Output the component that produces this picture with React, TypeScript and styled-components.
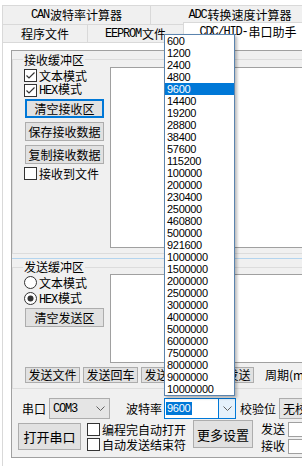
import React from 'react';
import styled, { createGlobalStyle, css } from 'styled-components';

const GlobalStyle = createGlobalStyle`
  html, body { margin: 0; padding: 0; background: #ffffff; }
  body {
    font-family: "Noto Sans CJK SC", "Liberation Sans", sans-serif;
    font-size: 12px;
    color: #000;
  }
  * { box-sizing: border-box; }
`;

const Window = styled.div`
  position: relative;
  width: 302px;
  height: 466px;
  overflow: hidden;
  background: #fff;
  display: flex;
  flex-direction: column;
`;

const TabHeader = styled.div`
  flex: none;
  height: 42px;
  padding: 5px 0 0 2px;
  display: flex;
  flex-direction: column;
`;

const TabRow = styled.div<{ $h: number }>`
  flex: none;
  display: flex;
  align-items: flex-end;
  height: ${(p) => p.$h}px;
`;

const Tab = styled.div<{ $w: number; $active?: boolean }>`
  flex: 0 0 ${(p) => p.$w}px;
  height: 100%;
  margin-right: -1px;
  border: 1px solid #d9d9d9;
  border-bottom: none;
  background: #f0f0f0;
  display: flex;
  align-items: center;
  justify-content: center;
  white-space: nowrap;
  line-height: 14px;
  ${(p) =>
    p.$active &&
    css`
      position: relative;
      z-index: 2;
      height: 21px;
      margin-bottom: -1px;
      padding-bottom: 2px;
      background: #fff;
    `}
`;

const Narrow = styled.span`
  font-family: "Liberation Mono", monospace;
  font-size: 12px;
  letter-spacing: -1.2px;
  margin-right: 1px;
`;

const TabPage = styled.div`
  flex: 1;
  margin-left: 2px;
  border-left: 1px solid #d9d9d9;
  border-top: 1px solid #d9d9d9;
  background: #fff;
  padding: 7px 0 0 8px;
`;

const Frame = styled.div`
  width: 330px;
  height: 408px;
  border: 1px solid #a0a0a0;
  border-right: none;
  background: #f0f0f0;
  display: flex;
  flex-direction: column;
`;

const Group = styled.fieldset<{ $mt: number; $pb: number }>`
  margin: ${(p) => p.$mt}px 0 0 0;
  padding: 0 0 ${(p) => p.$pb}px 11px;
  width: 320px;
  min-width: 0;
  border: 1px solid #dcdcdc;
  border-right: none;
`;

const Legend = styled.legend<{ $lh: number }>`
  padding: 0 1px;
  margin-left: -1px;
  line-height: ${(p) => p.$lh}px;
  font-size: 12px;
`;

const GroupBody = styled.div`
  display: grid;
  grid-template-columns: 86px 1fr;
  align-items: start;
`;

const Side = styled.div<{ $pt: number }>`
  display: flex;
  flex-direction: column;
  align-items: flex-start;
  padding-top: ${(p) => p.$pt}px;
`;

const TextBox = styled.div<{ $h: number }>`
  margin-top: 1px;
  height: ${(p) => p.$h}px;
  background: #fff;
  border: 1px solid #a0a0a0;
  border-right: none;
`;

const OptionRow = styled.div<{ $mt?: number; $h?: number }>`
  display: flex;
  align-items: center;
  gap: 2px;
  height: ${(p) => p.$h ?? 14}px;
  margin-top: ${(p) => p.$mt ?? 0}px;
  line-height: 13px;
  white-space: nowrap;
`;

const Button = styled.button<{ $w: number; $h: number; $mt?: number; $ml?: number; $focus?: boolean; $big?: boolean }>`
  flex: none;
  width: ${(p) => p.$w}px;
  height: ${(p) => p.$h}px;
  margin: ${(p) => p.$mt ?? 0}px 0 0 ${(p) => p.$ml ?? 1}px;
  padding: 0;
  border: 1px solid #adadad;
  background: #e1e1e1;
  color: #000;
  font-family: inherit;
  font-size: ${(p) => (p.$big ? 13 : 12)}px;
  line-height: 1;
  display: flex;
  align-items: center;
  justify-content: center;
  white-space: nowrap;
  overflow: hidden;
  ${(p) =>
    p.$focus &&
    css`
      border-color: #0078d7;
      box-shadow: inset 0 0 0 1px #0078d7;
    `}
`;

const Splitter = styled.div`
  height: 1px;
  margin: 4px 0 2px;
  background: #b3d4ee;
`;

const ButtonRow = styled.div`
  display: flex;
  align-items: center;
  gap: 2px;
  margin-top: 4px;
  white-space: nowrap;
`;

const Hint = styled.span`
  margin-left: 9px;
  line-height: 14px;
`;

const ControlRow = styled.div<{ $mt: number; $pl: number; $h: number }>`
  display: flex;
  align-items: flex-start;
  margin-top: ${(p) => p.$mt}px;
  padding-left: ${(p) => p.$pl}px;
  height: ${(p) => p.$h}px;
  white-space: nowrap;
`;

const Caption = styled.span<{ $ml?: number; $mr?: number; $top?: number }>`
  margin-left: ${(p) => p.$ml ?? 0}px;
  margin-right: ${(p) => p.$mr ?? 0}px;
  margin-top: ${(p) => p.$top ?? 0}px;
  line-height: 14px;
`;

const Combo = styled.div<{ $w: number }>`
  flex: none;
  width: ${(p) => p.$w}px;
  height: 21px;
  border: 1px solid #adadad;
  background: #e5e5e5;
  display: flex;
  align-items: center;
  justify-content: space-between;
  padding: 0 4px 0 3px;
  overflow: hidden;
`;

const EditCombo = styled.div`
  flex: none;
  width: 72px;
  height: 21px;
  border: 1px solid #0078d7;
  background: #fff;
  display: flex;
`;

const EditField = styled.div`
  flex: 1;
  display: flex;
  align-items: center;
  padding-left: 1px;
`;

const SelText = styled.span`
  background: #0078d7;
  color: #fff;
  font-family: "Liberation Sans", sans-serif;
  font-size: 11px;
  letter-spacing: -0.3px;
  line-height: 13px;
  padding: 0 2px 0 1px;
`;

const DropButton = styled.div`
  width: 17px;
  border-left: 1px solid #0078d7;
  background: #e5f1fb;
  display: flex;
  align-items: center;
  justify-content: center;
`;

const OptionColumn = styled.div<{ $ml: number; $mt: number }>`
  display: flex;
  flex-direction: column;
  gap: 1px;
  margin-left: ${(p) => p.$ml}px;
  margin-top: ${(p) => p.$mt}px;
`;

const CountRow = styled.div`
  display: flex;
  align-items: center;
  height: 16px;
  gap: 3px;
  line-height: 14px;
`;

const SmallBox = styled.div`
  width: 30px;
  height: 15px;
  border: 1px solid #a0a0a0;
  background: #fff;
`;

const DropList = styled.ul`
  position: absolute;
  left: 164px;
  top: 34px;
  width: 71px;
  margin: 0;
  padding: 0;
  list-style: none;
  background: #fff;
  border: 1px solid #5b84ae;
  box-shadow: 2px 2px 3px rgba(0, 0, 0, 0.28);
  z-index: 10;
`;

const DropItem = styled.li<{ $sel?: boolean }>`
  height: 12px;
  line-height: 12px;
  padding-left: 2px;
  font-family: "Liberation Sans", sans-serif;
  font-size: 11px;
  letter-spacing: -0.3px;
  ${(p) =>
    p.$sel &&
    css`
      background: #0078d7;
      color: #fff;
    `}
`;

const CheckIcon = ({ checked }: { checked?: boolean }) => (
  <svg width="13" height="13" viewBox="0 0 13 13">
    <rect x="0.5" y="0.5" width="12" height="12" fill="#fff" stroke="#333" />
    {checked && (
      <polyline points="2.5,6.5 5,9 10.5,3.5" fill="none" stroke="#333" strokeWidth="1.2" />
    )}
  </svg>
);

const RadioIcon = ({ checked }: { checked?: boolean }) => (
  <svg width="13" height="13" viewBox="0 0 13 13">
    <circle cx="6.5" cy="6.5" r="6" fill="#fff" stroke="#333" />
    {checked && <circle cx="6.5" cy="6.5" r="3" fill="#333" />}
  </svg>
);

const Chevron = () => (
  <svg width="9" height="5" viewBox="0 0 9 5">
    <polyline points="0.5,0.5 4.5,4.5 8.5,0.5" fill="none" stroke="#606060" />
  </svg>
);

const bauds = [
  '600', '1200', '2400', '4800', '9600', '14400', '19200', '28800', '38400', '57600',
  '115200', '100000', '200000', '230400', '250000', '460800', '500000', '921600',
  '1000000', '1500000', '2000000', '2500000', '3000000', '4000000', '5000000',
  '6000000', '7500000', '8000000', '9000000', '10000000',
];

export default function App() {
  return (
    <>
      <GlobalStyle />
      <Window>
        <TabHeader>
          <TabRow $h={19}>
            <Tab $w={149}>
              <Narrow>CAN</Narrow>波特率计算器
            </Tab>
            <Tab $w={180}>
              <Narrow>ADC</Narrow>转换速度计算器
            </Tab>
          </TabRow>
          <TabRow $h={18}>
            <Tab $w={86}>程序文件</Tab>
            <Tab $w={97}>
              <Narrow>EEPROM</Narrow>文件
            </Tab>
            <Tab $w={130} $active>
              <Narrow>CDC/HID-</Narrow>串口助手
            </Tab>
          </TabRow>
        </TabHeader>

        <TabPage>
          <Frame>
            <Group $mt={2} $pb={5}>
              <Legend $lh={13}>接收缓冲区</Legend>
              <GroupBody>
                <Side $pt={2}>
                  <OptionRow>
                    <CheckIcon checked />
                    文本模式
                  </OptionRow>
                  <OptionRow $mt={1}>
                    <CheckIcon checked />
                    <span>
                      <Narrow>HEX</Narrow>模式
                    </span>
                  </OptionRow>
                  <Button $w={79} $h={19} $mt={2} $focus>
                    清空接收区
                  </Button>
                  <Button $w={79} $h={19} $mt={4}>
                    保存接收数据
                  </Button>
                  <Button $w={79} $h={19} $mt={4}>
                    复制接收数据
                  </Button>
                  <OptionRow $mt={2}>
                    <CheckIcon />
                    接收到文件
                  </OptionRow>
                </Side>
                <TextBox $h={181} />
              </GroupBody>
            </Group>

            <Splitter />

            <Group $mt={0} $pb={5}>
              <Legend $lh={12}>发送缓冲区</Legend>
              <GroupBody>
                <Side $pt={2}>
                  <OptionRow $h={15}>
                    <RadioIcon />
                    文本模式
                  </OptionRow>
                  <OptionRow $h={15} $mt={1}>
                    <RadioIcon checked />
                    <span>
                      <Narrow>HEX</Narrow>模式
                    </span>
                  </OptionRow>
                  <Button $w={79} $h={19} $mt={2}>
                    清空发送区
                  </Button>
                </Side>
                <TextBox $h={89} />
              </GroupBody>
              <ButtonRow>
                <Button $w={55} $h={16}>发送文件</Button>
                <Button $w={55} $h={16}>发送回车</Button>
                <Button $w={55} $h={16}>发送数据</Button>
                <Button $w={55} $h={16}>定时发送</Button>
                <Hint>周期(ms)</Hint>
              </ButtonRow>
            </Group>

            <ControlRow $mt={9} $pl={10} $h={22}>
              <Caption $mr={3} $top={4}>串口</Caption>
              <Combo $w={61}>
                <Narrow>COM3</Narrow>
                <Chevron />
              </Combo>
              <Caption $ml={16} $mr={2} $top={4}>波特率</Caption>
              <EditCombo>
                <EditField>
                  <SelText>9600</SelText>
                </EditField>
                <DropButton>
                  <Chevron />
                </DropButton>
              </EditCombo>
              <Caption $ml={4} $mr={3} $top={4}>校验位</Caption>
              <Combo $w={60}>无校验</Combo>
            </ControlRow>

            <ControlRow $mt={0} $pl={5} $h={34}>
              <Button $w={63} $h={27} $mt={3} $big>
                打开串口
              </Button>
              <OptionColumn $ml={6} $mt={2}>
                <OptionRow>
                  <CheckIcon />
                  编程完自动打开
                </OptionRow>
                <OptionRow>
                  <CheckIcon />
                  自动发送结束符
                </OptionRow>
              </OptionColumn>
              <Button $w={60} $h={28} $mt={0} $ml={7} $big>
                更多设置
              </Button>
              <OptionColumn $ml={8} $mt={1}>
                <CountRow>
                  发送
                  <SmallBox />
                </CountRow>
                <CountRow>
                  接收
                  <SmallBox />
                </CountRow>
              </OptionColumn>
            </ControlRow>
          </Frame>
        </TabPage>

        <DropList>
          {bauds.map((b) => (
            <DropItem key={b} $sel={b === '9600'}>
              {b}
            </DropItem>
          ))}
        </DropList>
      </Window>
    </>
  );
}
